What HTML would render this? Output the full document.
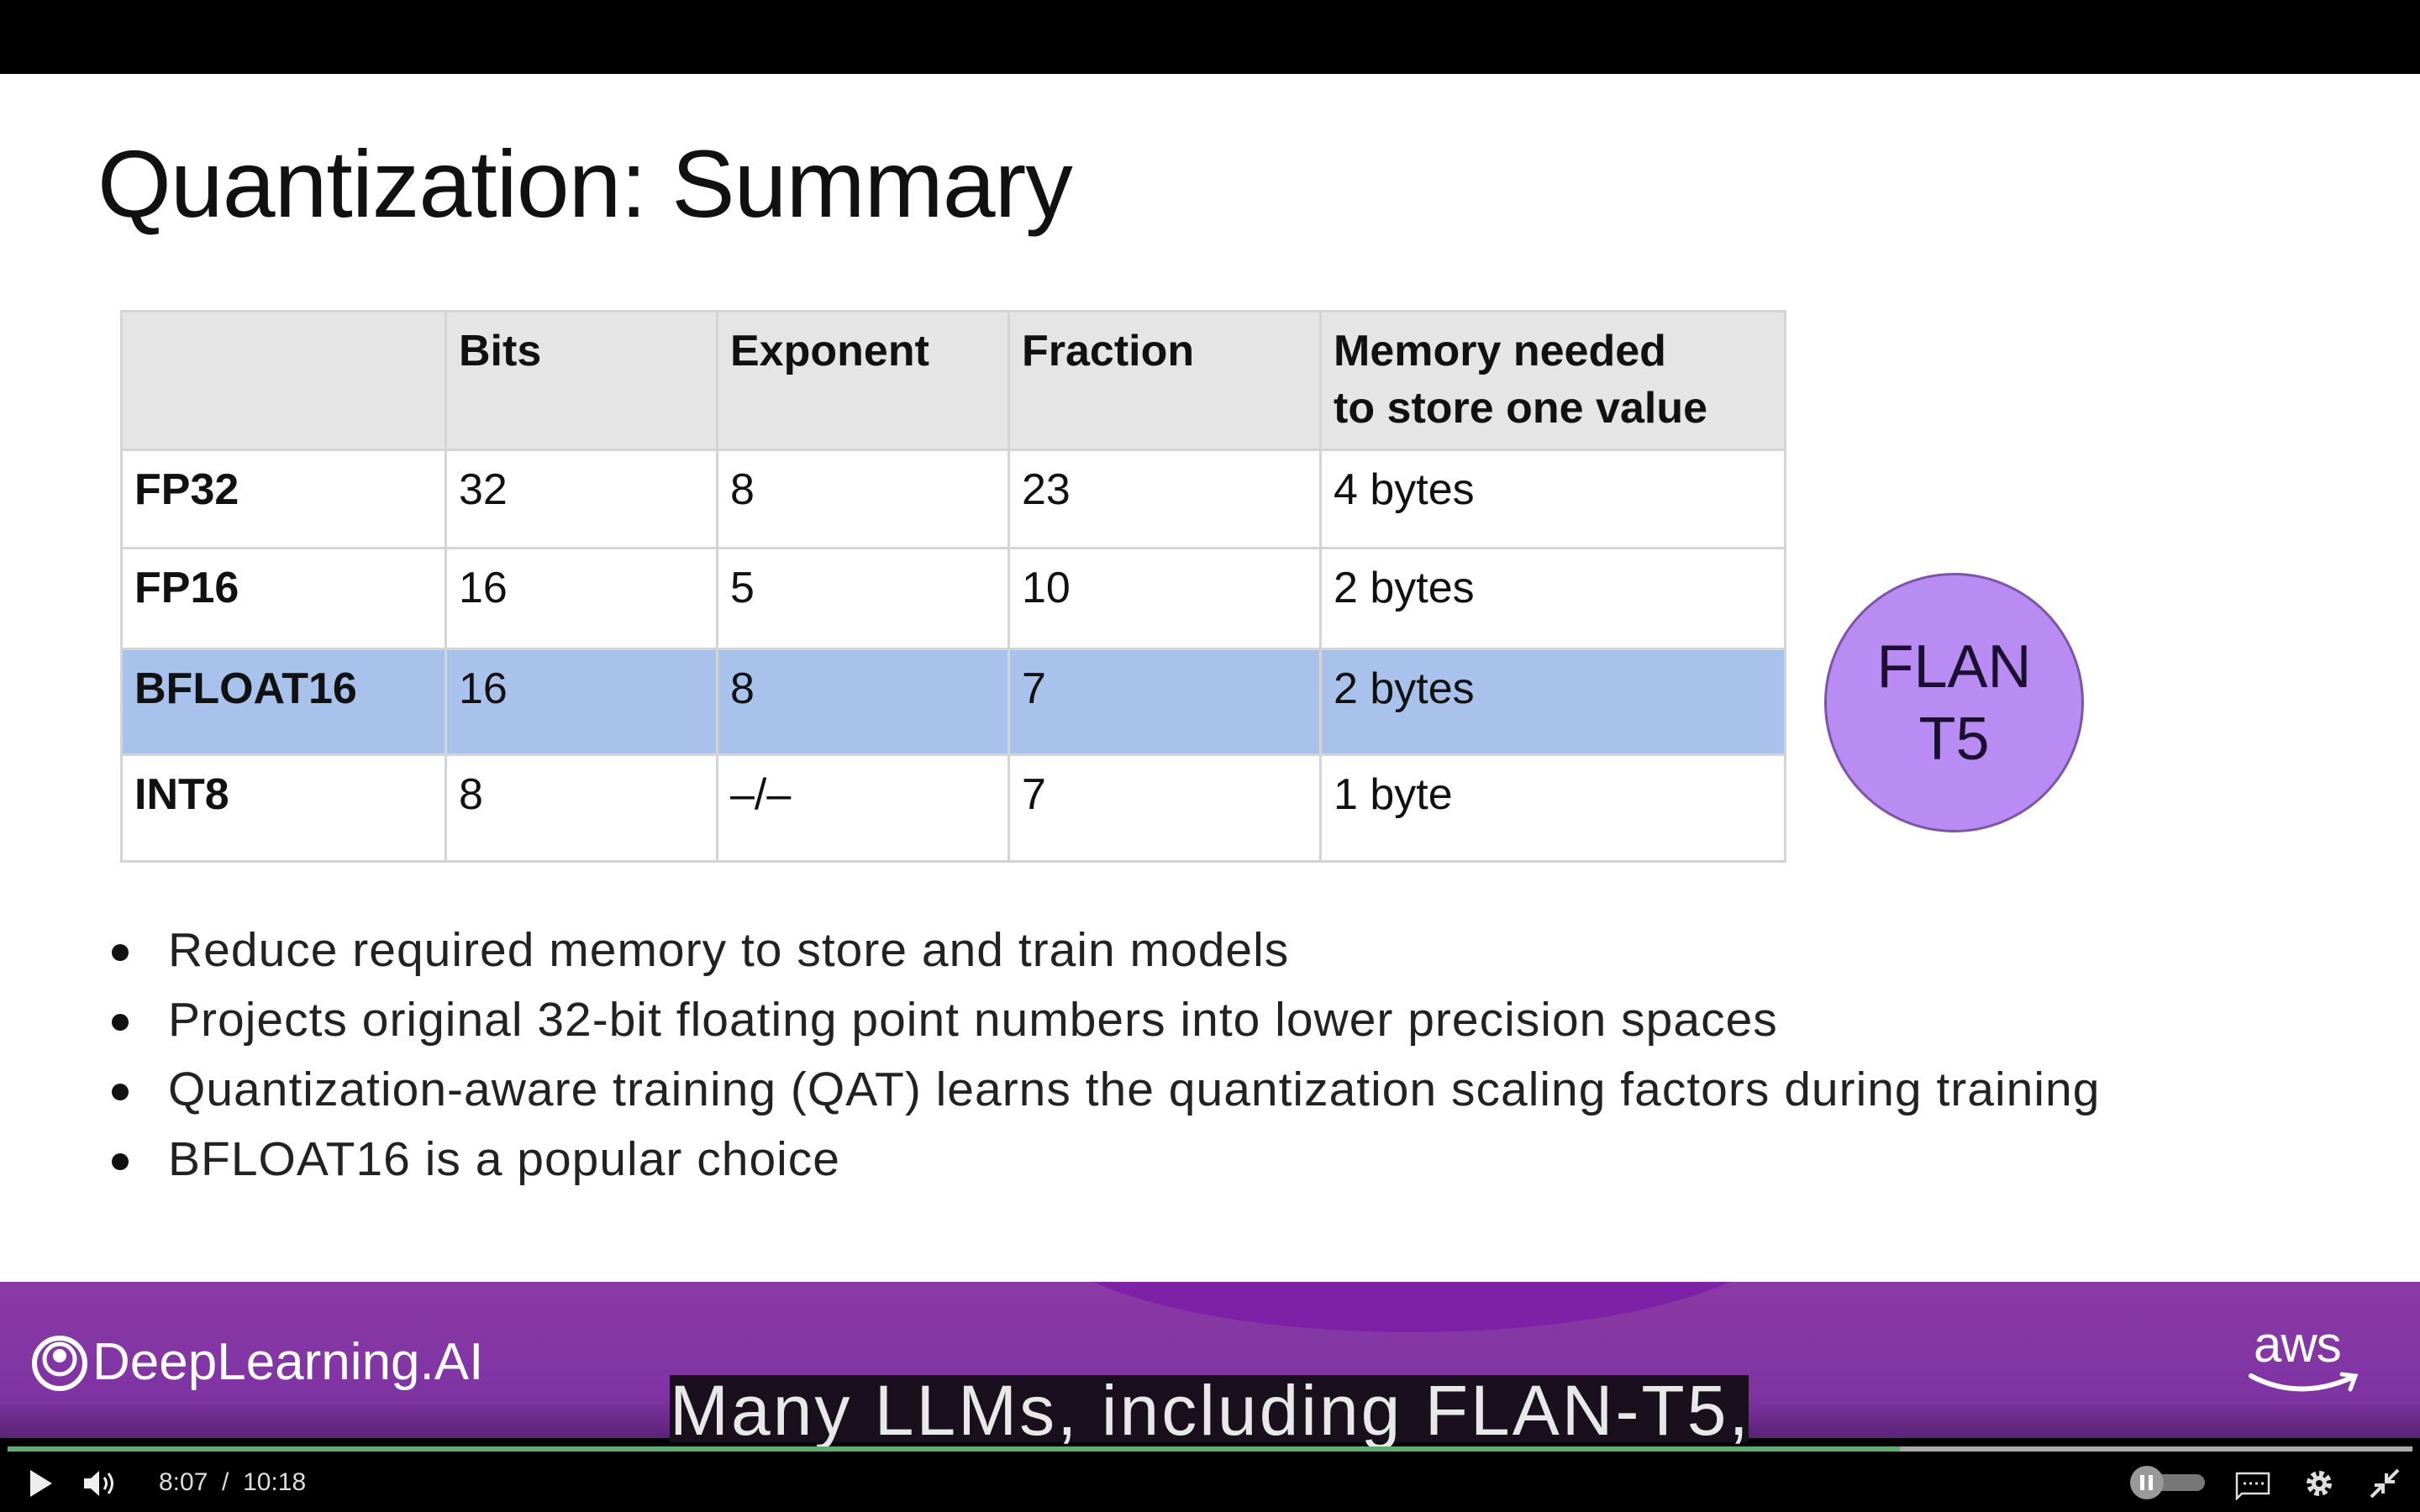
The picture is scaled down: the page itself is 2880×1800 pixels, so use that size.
<!DOCTYPE html>
<html><head><meta charset="utf-8"><style>
*{margin:0;padding:0;box-sizing:border-box}
body{width:2880px;height:1800px;background:#000;position:relative;overflow:hidden;font-family:"Liberation Sans",sans-serif}
.slide{position:absolute;left:0;top:88px;width:2880px;height:1438px;background:#fff}
.abs{position:absolute}
h1{position:absolute;left:116px;top:154px;font-size:113px;font-weight:400;color:#111;white-space:nowrap;letter-spacing:-1px}
table{position:absolute;left:143px;top:369px;border-collapse:collapse;font-size:52px;color:#111}
td{border:3px solid #d4d4d4;vertical-align:top;padding:12px 14px 0 14px;line-height:68px}
tr.h td{background:#e5e5e5;font-weight:bold;height:165px}
tr.r td{height:117px}
tr.r2 td{height:120px}
tr.b td{background:#a8c2ec;height:126px}
tr.r3 td{height:127px}
td.f{font-weight:bold}
.circle{position:absolute;left:2171px;top:682px;width:309px;height:309px;border-radius:50%;background:#b98cf3;border:3px solid #7c54a8;text-align:center;font-size:72px;line-height:86px;color:#1a1030;padding-top:66px}
ul{position:absolute;left:130px;top:1090px;list-style:none;font-size:57px;color:#222;letter-spacing:1px}
li{height:83px;line-height:83px;position:relative;padding-left:70px;white-space:nowrap}
li:before{content:"";position:absolute;left:3px;top:34px;width:20px;height:20px;border-radius:50%;background:#111}
.band{position:absolute;left:0;top:1526px;width:2880px;height:186px;background:linear-gradient(180deg,#8a3aa6 0%,#7f33a3 75%,#5a2475 100%);overflow:hidden}
.blob{position:absolute;left:1230px;top:-200px;width:900px;height:260px;border-radius:50%;background:#7d22a6}
.cap{position:absolute;left:797px;top:1637px;width:1284px;height:80px;background:#1a0f1c;color:#e8e8e8;font-size:84px;line-height:84px;white-space:nowrap;overflow:visible;letter-spacing:3px}
</style></head><body>
<div class="slide"></div>
<h1>Quantization: Summary</h1>
<table>
<colgroup><col style="width:386px"><col style="width:323px"><col style="width:347px"><col style="width:371px"><col style="width:553px"></colgroup>
<tr class="h"><td></td><td>Bits</td><td>Exponent</td><td>Fraction</td><td>Memory needed<br>to store one value</td></tr>
<tr class="r"><td class="f">FP32</td><td>32</td><td>8</td><td>23</td><td>4 bytes</td></tr>
<tr class="r2"><td class="f">FP16</td><td>16</td><td>5</td><td>10</td><td>2 bytes</td></tr>
<tr class="b"><td class="f">BFLOAT16</td><td>16</td><td>8</td><td>7</td><td>2 bytes</td></tr>
<tr class="r3"><td class="f">INT8</td><td>8</td><td>–/–</td><td>7</td><td>1 byte</td></tr>
</table>
<div class="circle">FLAN<br>T5</div>
<ul>
<li>Reduce required memory to store and train models</li>
<li>Projects original 32-bit floating point numbers into lower precision spaces</li>
<li>Quantization-aware training (QAT) learns the quantization scaling factors during training</li>
<li>BFLOAT16 is a popular choice</li>
</ul>
<div class="band"><div class="blob"></div>
<svg class="abs" style="left:36px;top:62px" width="70" height="70" viewBox="0 0 70 70"><circle cx="35" cy="35" r="30" fill="none" stroke="#fff" stroke-width="6"/><circle cx="35" cy="30" r="18" fill="none" stroke="#fff" stroke-width="5"/><circle cx="35" cy="26" r="8" fill="#fff"/></svg>
<div class="abs" style="left:110px;top:60px;font-size:62px;color:#fff;white-space:nowrap">DeepLearning.AI</div>
<div class="abs" style="left:2682px;top:40px;font-size:60px;color:#fff;letter-spacing:-1px">aws</div>
<svg class="abs" style="left:2675px;top:104px" width="140" height="40" viewBox="0 0 140 40"><path d="M4 8 Q60 38 124 10" fill="none" stroke="#fff" stroke-width="6" stroke-linecap="round"/><path d="M112 6 L128 8 L122 24" fill="none" stroke="#fff" stroke-width="5" stroke-linecap="round"/></svg>
</div>
<div class="cap">Many LLMs, including FLAN-T5,</div>
<div class="abs" style="left:9px;top:1722px;width:2252px;height:6px;background:#5fae6f"></div>
<div class="abs" style="left:2261px;top:1722px;width:610px;height:6px;background:#aaa"></div>
<svg class="abs" style="left:34px;top:1748px" width="30" height="36" viewBox="0 0 30 36"><path d="M2 2 L28 18 L2 34Z" fill="#eee"/></svg>
<svg class="abs" style="left:98px;top:1748px" width="44" height="36" viewBox="0 0 44 36"><path d="M2 12 H10 L20 3 V33 L10 24 H2Z" fill="#eee"/><path d="M26 11 Q31 18 26 25 M31 6 Q40 18 31 30" fill="none" stroke="#eee" stroke-width="3"/></svg>
<div class="abs" style="left:189px;top:1748px;font-size:30px;color:#ddd;white-space:nowrap">8:07&nbsp; / &nbsp;10:18</div>
<div class="abs" style="left:2537px;top:1755px;width:87px;height:20px;border-radius:10px;background:#777"></div>
<div class="abs" style="left:2535px;top:1745px;width:40px;height:40px;border-radius:50%;background:#999"></div>
<div class="abs" style="left:2547px;top:1756px;width:5px;height:18px;background:#fff"></div>
<div class="abs" style="left:2557px;top:1756px;width:5px;height:18px;background:#fff"></div>
<svg class="abs" style="left:2660px;top:1752px" width="42" height="34" viewBox="0 0 42 34"><path d="M2 2 H40 V26 H8 L2 32Z" fill="none" stroke="#ddd" stroke-width="2.5"/><path d="M10 14h3M17 14h3M24 14h3M31 14h3" stroke="#ddd" stroke-width="3"/></svg>
<svg class="abs" style="left:2742px;top:1748px" width="36" height="36" viewBox="0 0 36 36"><circle cx="18" cy="18" r="11" fill="none" stroke="#ddd" stroke-width="8" stroke-dasharray="5 3.6"/><circle cx="18" cy="18" r="9" fill="#ddd"/><circle cx="18" cy="18" r="4" fill="#000"/></svg>
<svg class="abs" style="left:2820px;top:1748px" width="36" height="36" viewBox="0 0 36 36"><path d="M2 34 L14 22 M6 20 H16 V30 M34 2 L22 14 M20 6 V16 H30" fill="none" stroke="#ddd" stroke-width="4"/></svg>
</body></html>
